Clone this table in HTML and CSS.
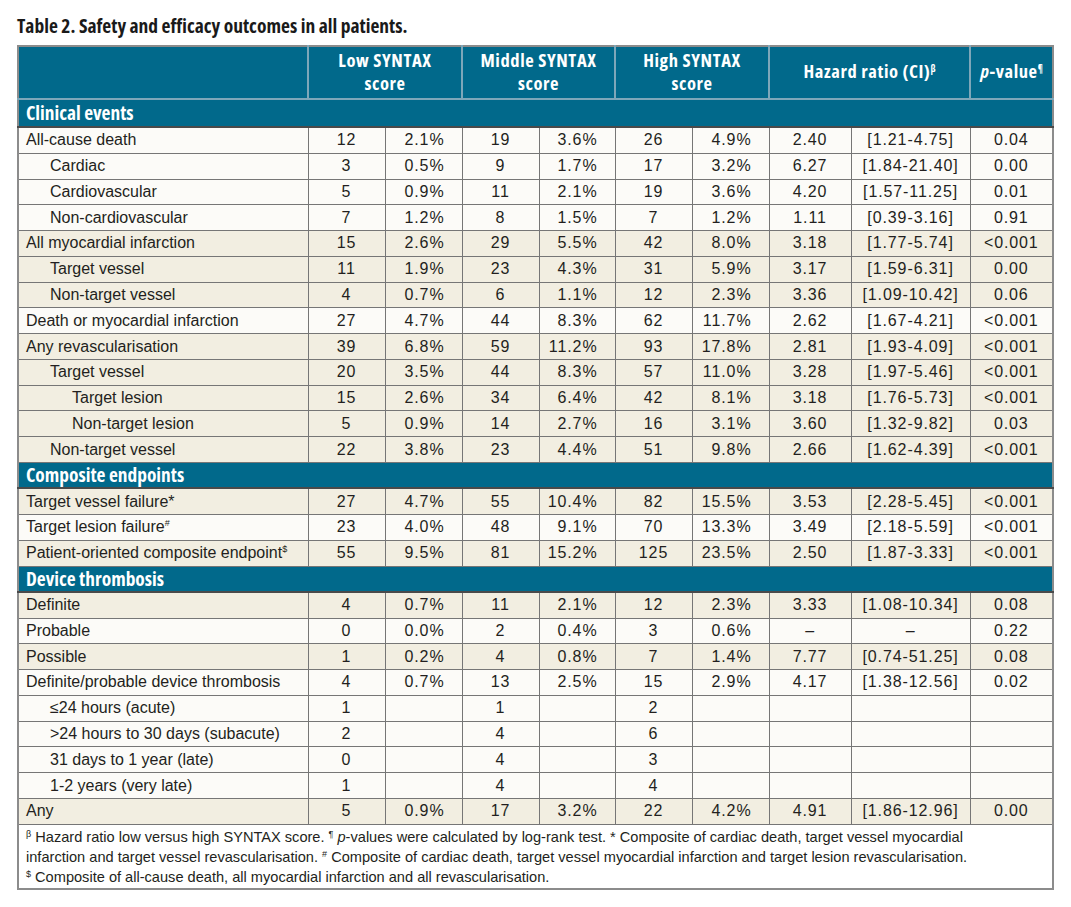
FILE: index.html
```html
<!DOCTYPE html>
<html lang="en">
<head>
<meta charset="utf-8">
<title>Table 2</title>
<link rel="stylesheet" href="styles.css">
</head>
<body>
<div class="page">
  <h1 class="title">Table 2. Safety and efficacy outcomes in all patients.</h1>
  <table class="tbl">
    <colgroup>
      <col class="c-label"><col class="c-n"><col class="c-n"><col class="c-n"><col class="c-n2"><col class="c-n"><col class="c-n"><col class="c-hr"><col class="c-ci"><col class="c-p">
    </colgroup>
    <thead>
      <tr class="head">
        <th></th>
        <th colspan="2">Low SYNTAX<br>score</th>
        <th colspan="2">Middle SYNTAX<br>score</th>
        <th colspan="2">High SYNTAX<br>score</th>
        <th colspan="2">Hazard ratio (CI)<sup>β</sup></th>
        <th><i>p</i>-value<sup>¶</sup></th>
      </tr>
    </thead>
    <tbody>
      <tr class="sec first"><td colspan="10">Clinical events</td></tr>
      <tr class="w"><td class="l1">All-cause death</td><td class="n">12</td><td class="pc">2.1%</td><td class="n">19</td><td class="pc">3.6%</td><td class="n">26</td><td class="pc">4.9%</td><td class="n">2.40</td><td class="n">[1.21-4.75]</td><td class="n">0.04</td></tr>
      <tr class="w"><td class="l2">Cardiac</td><td class="n">3</td><td class="pc">0.5%</td><td class="n">9</td><td class="pc">1.7%</td><td class="n">17</td><td class="pc">3.2%</td><td class="n">6.27</td><td class="n">[1.84-21.40]</td><td class="n">0.00</td></tr>
      <tr class="w"><td class="l2">Cardiovascular</td><td class="n">5</td><td class="pc">0.9%</td><td class="n">11</td><td class="pc">2.1%</td><td class="n">19</td><td class="pc">3.6%</td><td class="n">4.20</td><td class="n">[1.57-11.25]</td><td class="n">0.01</td></tr>
      <tr class="w"><td class="l2">Non-cardiovascular</td><td class="n">7</td><td class="pc">1.2%</td><td class="n">8</td><td class="pc">1.5%</td><td class="n">7</td><td class="pc">1.2%</td><td class="n">1.11</td><td class="n">[0.39-3.16]</td><td class="n">0.91</td></tr>
      <tr class="b"><td class="l1">All myocardial infarction</td><td class="n">15</td><td class="pc">2.6%</td><td class="n">29</td><td class="pc">5.5%</td><td class="n">42</td><td class="pc">8.0%</td><td class="n">3.18</td><td class="n">[1.77-5.74]</td><td class="n">&lt;0.001</td></tr>
      <tr class="b"><td class="l2">Target vessel</td><td class="n">11</td><td class="pc">1.9%</td><td class="n">23</td><td class="pc">4.3%</td><td class="n">31</td><td class="pc">5.9%</td><td class="n">3.17</td><td class="n">[1.59-6.31]</td><td class="n">0.00</td></tr>
      <tr class="b"><td class="l2">Non-target vessel</td><td class="n">4</td><td class="pc">0.7%</td><td class="n">6</td><td class="pc">1.1%</td><td class="n">12</td><td class="pc">2.3%</td><td class="n">3.36</td><td class="n">[1.09-10.42]</td><td class="n">0.06</td></tr>
      <tr class="w"><td class="l1">Death or myocardial infarction</td><td class="n">27</td><td class="pc">4.7%</td><td class="n">44</td><td class="pc">8.3%</td><td class="n">62</td><td class="pc">11.7%</td><td class="n">2.62</td><td class="n">[1.67-4.21]</td><td class="n">&lt;0.001</td></tr>
      <tr class="b"><td class="l1">Any revascularisation</td><td class="n">39</td><td class="pc">6.8%</td><td class="n">59</td><td class="pc">11.2%</td><td class="n">93</td><td class="pc">17.8%</td><td class="n">2.81</td><td class="n">[1.93-4.09]</td><td class="n">&lt;0.001</td></tr>
      <tr class="b"><td class="l2">Target vessel</td><td class="n">20</td><td class="pc">3.5%</td><td class="n">44</td><td class="pc">8.3%</td><td class="n">57</td><td class="pc">11.0%</td><td class="n">3.28</td><td class="n">[1.97-5.46]</td><td class="n">&lt;0.001</td></tr>
      <tr class="b"><td class="l3">Target lesion</td><td class="n">15</td><td class="pc">2.6%</td><td class="n">34</td><td class="pc">6.4%</td><td class="n">42</td><td class="pc">8.1%</td><td class="n">3.18</td><td class="n">[1.76-5.73]</td><td class="n">&lt;0.001</td></tr>
      <tr class="b"><td class="l3">Non-target lesion</td><td class="n">5</td><td class="pc">0.9%</td><td class="n">14</td><td class="pc">2.7%</td><td class="n">16</td><td class="pc">3.1%</td><td class="n">3.60</td><td class="n">[1.32-9.82]</td><td class="n">0.03</td></tr>
      <tr class="b"><td class="l2">Non-target vessel</td><td class="n">22</td><td class="pc">3.8%</td><td class="n">23</td><td class="pc">4.4%</td><td class="n">51</td><td class="pc">9.8%</td><td class="n">2.66</td><td class="n">[1.62-4.39]</td><td class="n">&lt;0.001</td></tr>
      <tr class="sec"><td colspan="10">Composite endpoints</td></tr>
      <tr class="b"><td class="l1">Target vessel failure*</td><td class="n">27</td><td class="pc">4.7%</td><td class="n">55</td><td class="pc">10.4%</td><td class="n">82</td><td class="pc">15.5%</td><td class="n">3.53</td><td class="n">[2.28-5.45]</td><td class="n">&lt;0.001</td></tr>
      <tr class="w"><td class="l1">Target lesion failure<sup>#</sup></td><td class="n">23</td><td class="pc">4.0%</td><td class="n">48</td><td class="pc">9.1%</td><td class="n">70</td><td class="pc">13.3%</td><td class="n">3.49</td><td class="n">[2.18-5.59]</td><td class="n">&lt;0.001</td></tr>
      <tr class="b"><td class="l1">Patient-oriented composite endpoint<sup>$</sup></td><td class="n">55</td><td class="pc">9.5%</td><td class="n">81</td><td class="pc">15.2%</td><td class="n">125</td><td class="pc">23.5%</td><td class="n">2.50</td><td class="n">[1.87-3.33]</td><td class="n">&lt;0.001</td></tr>
      <tr class="sec"><td colspan="10">Device thrombosis</td></tr>
      <tr class="b"><td class="l1">Definite</td><td class="n">4</td><td class="pc">0.7%</td><td class="n">11</td><td class="pc">2.1%</td><td class="n">12</td><td class="pc">2.3%</td><td class="n">3.33</td><td class="n">[1.08-10.34]</td><td class="n">0.08</td></tr>
      <tr class="w"><td class="l1">Probable</td><td class="n">0</td><td class="pc">0.0%</td><td class="n">2</td><td class="pc">0.4%</td><td class="n">3</td><td class="pc">0.6%</td><td class="n">–</td><td class="n">–</td><td class="n">0.22</td></tr>
      <tr class="b"><td class="l1">Possible</td><td class="n">1</td><td class="pc">0.2%</td><td class="n">4</td><td class="pc">0.8%</td><td class="n">7</td><td class="pc">1.4%</td><td class="n">7.77</td><td class="n">[0.74-51.25]</td><td class="n">0.08</td></tr>
      <tr class="w"><td class="l1">Definite/probable device thrombosis</td><td class="n">4</td><td class="pc">0.7%</td><td class="n">13</td><td class="pc">2.5%</td><td class="n">15</td><td class="pc">2.9%</td><td class="n">4.17</td><td class="n">[1.38-12.56]</td><td class="n">0.02</td></tr>
      <tr class="w"><td class="l2">≤24 hours (acute)</td><td class="n">1</td><td class="pc"></td><td class="n">1</td><td class="pc"></td><td class="n">2</td><td class="pc"></td><td class="n"></td><td class="n"></td><td class="n"></td></tr>
      <tr class="w"><td class="l2">&gt;24 hours to 30 days (subacute)</td><td class="n">2</td><td class="pc"></td><td class="n">4</td><td class="pc"></td><td class="n">6</td><td class="pc"></td><td class="n"></td><td class="n"></td><td class="n"></td></tr>
      <tr class="w"><td class="l2">31 days to 1 year (late)</td><td class="n">0</td><td class="pc"></td><td class="n">4</td><td class="pc"></td><td class="n">3</td><td class="pc"></td><td class="n"></td><td class="n"></td><td class="n"></td></tr>
      <tr class="w"><td class="l2">1-2 years (very late)</td><td class="n">1</td><td class="pc"></td><td class="n">4</td><td class="pc"></td><td class="n">4</td><td class="pc"></td><td class="n"></td><td class="n"></td><td class="n"></td></tr>
      <tr class="b"><td class="l1">Any</td><td class="n">5</td><td class="pc">0.9%</td><td class="n">17</td><td class="pc">3.2%</td><td class="n">22</td><td class="pc">4.2%</td><td class="n">4.91</td><td class="n">[1.86-12.96]</td><td class="n">0.00</td></tr>
    </tbody>
    <tfoot>
      <tr class="foot">
        <td colspan="10"><sup>β</sup> Hazard ratio low versus high SYNTAX score. <sup>¶</sup> <i>p</i>-values were calculated by log-rank test. * Composite of cardiac death, target vessel myocardial<br>infarction and target vessel revascularisation. <sup>#</sup> Composite of cardiac death, target vessel myocardial infarction and target lesion revascularisation.<br><sup>$</sup> Composite of all-cause death, all myocardial infarction and all revascularisation.</td>
      </tr>
    </tfoot>
  </table>
</div>
</body>
</html>
```

FILE: styles.css
```css
html, body {
  margin: 0;
  padding: 0;
  background: #ffffff;
}

.page {
  padding: 14px 0 0 17px;
  font-family: "Liberation Sans", Arial, sans-serif;
  color: #231f20;
}

.title {
  margin: 0 0 7px 0;
  font-family: "Open Sans", "Liberation Sans", sans-serif;
  font-stretch: 75%;
  font-weight: bold;
  font-size: 19.5px;
  line-height: 24px;
  color: #1a1a1a;
}

.tbl {
  width: 1035px;
  table-layout: fixed;
  border-collapse: collapse;
  border: 2px solid #8c8c8c;
  font-size: 16px;
}

.c-label { width: 290px; }
.c-n { width: 77px; }
.c-n2 { width: 76px; }
.c-hr { width: 82px; }
.c-ci { width: 119px; }
.c-p { width: 83px; }

.head th {
  height: 47px;
  padding: 0 0 4px 0;
  background: #01698b;
  color: #ffffff;
  font-family: "Open Sans", "Liberation Sans", sans-serif;
  font-stretch: 75%;
  font-weight: bold;
  font-size: 18.5px;
  letter-spacing: 0.6px;
  line-height: 23px;
  text-align: center;
  vertical-align: middle;
  border-left: 2px solid #7ea7b9;
  border-bottom: 2px solid #7ea7b9;
}

.head th:first-child { border-left: none; }

.head sup {
  font-size: 10px;
  vertical-align: 6px;
  line-height: 0;
  letter-spacing: 0;
}

.sec td {
  height: 24.27px;
  padding: 0 0 0 7px;
  background: #01698b;
  color: #ffffff;
  font-family: "Open Sans", "Liberation Sans", sans-serif;
  font-stretch: 75%;
  font-weight: bold;
  font-size: 19.4px;
  line-height: 20px;
  border-bottom: 2px solid #4a4a4a;
}

.sec.first td { height: 26px; }

tbody tr.w td,
tbody tr.b td {
  height: 24.77px;
  padding: 0;
  line-height: 20px;
  border: 1px solid #767676;
  vertical-align: middle;
  white-space: nowrap;
}

tr.w td { background: #fcfbf8; }
tr.b td { background: #f2eee1; }

td.l1 { padding-left: 7px !important; }
td.l2 { padding-left: 31px !important; }
td.l3 { padding-left: 53px !important; }

td.n {
  text-align: center;
  letter-spacing: 0.9px;
}

td.pc {
  text-align: right;
  padding-right: 17px !important;
  letter-spacing: 0.9px;
}

tbody sup {
  font-size: 9px;
  vertical-align: 6px;
  line-height: 0;
}

.foot td {
  padding: 2px 7px 1px 7px;
  font-size: 14.6px;
  line-height: 20px;
  white-space: nowrap;
  background: #ffffff;
  border-top: 1px solid #767676;
}

.foot sup {
  font-size: 9px;
  vertical-align: 5px;
  line-height: 0;
}
```
